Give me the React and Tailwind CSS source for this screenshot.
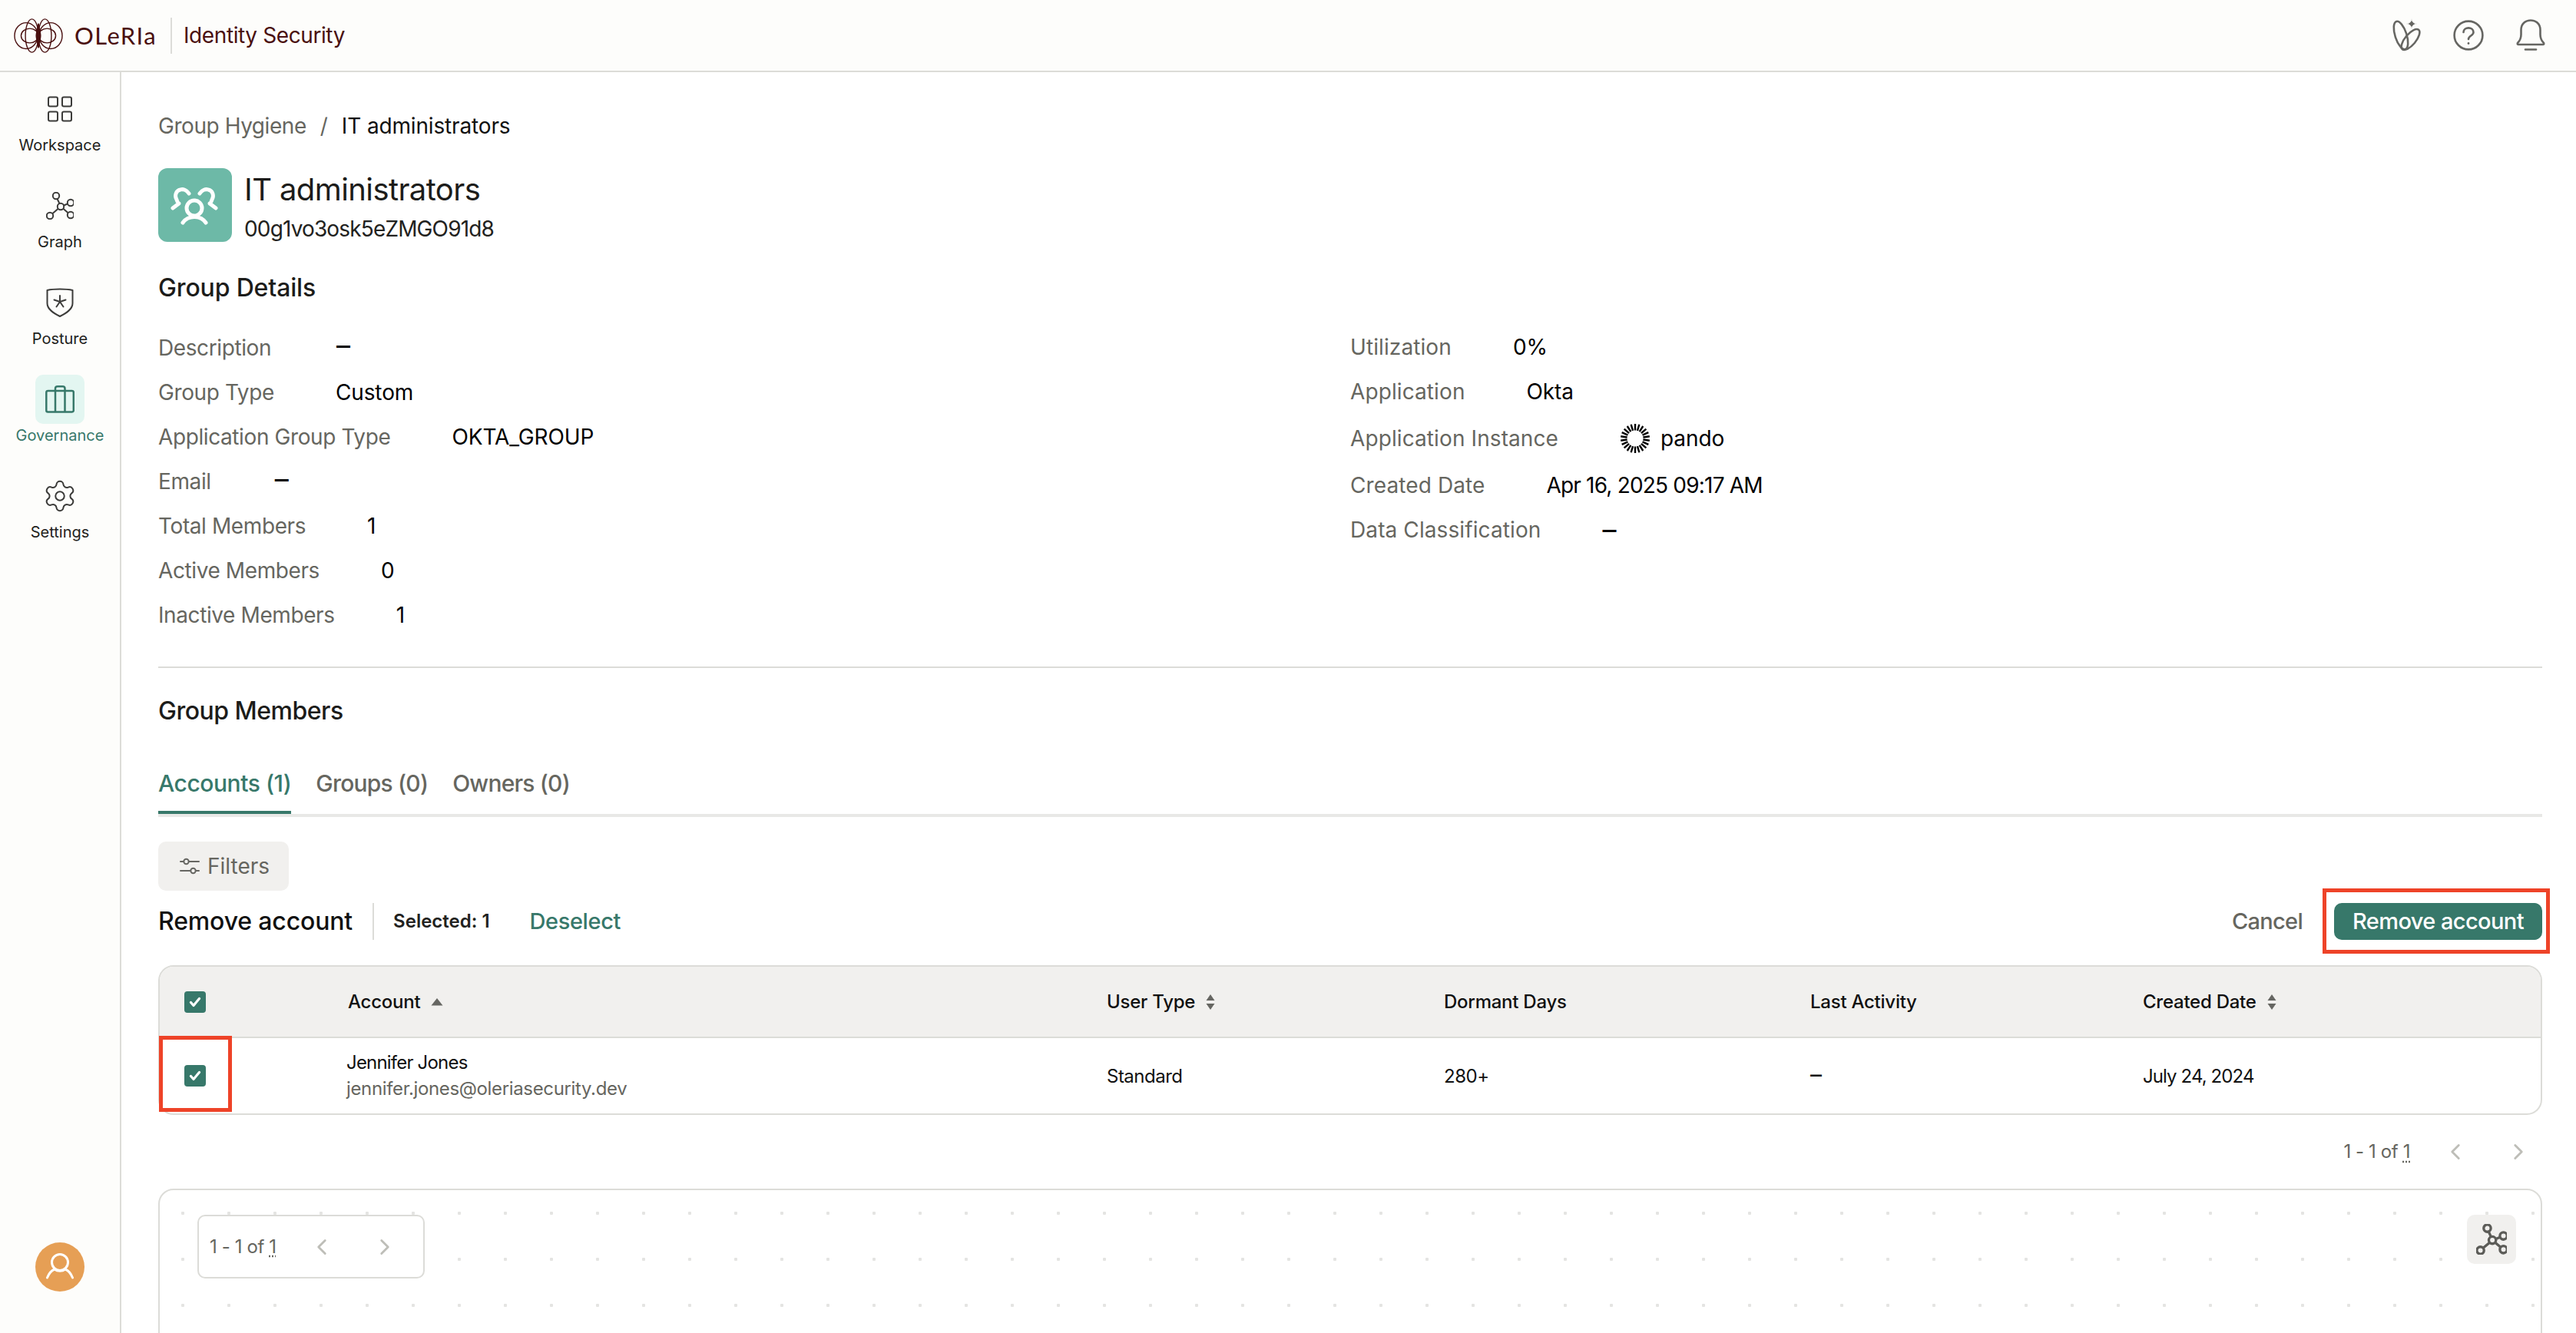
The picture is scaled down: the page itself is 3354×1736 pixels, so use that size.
import { Settings, ChevronLeft, ChevronRight } from 'lucide-react';

const Dash = ({ size = 'text-[36px]' }) => <span className={`${size} leading-none`}>–</span>;

const detailsLeft = [
  { label: 'Description', value: <span className="ml-[5px]"><Dash /></span> },
  { label: 'Group Type', value: 'Custom' },
  { label: 'Application Group Type', value: 'OKTA_GROUP' },
  { label: 'Email', value: <span className="ml-[3px]"><Dash /></span> },
  { label: 'Total Members', value: '1' },
  { label: 'Active Members', value: '0' },
  { label: 'Inactive Members', value: '1' },
];

const Logo = () => (
  <svg width="64" height="47" viewBox="0 0 68 50" fill="none" stroke="#4a1010" strokeWidth="1.5">
    <ellipse cx="17" cy="25" rx="16" ry="18" />
    <ellipse cx="51" cy="25" rx="16" ry="18" />
    <ellipse cx="22" cy="25" rx="12" ry="10" />
    <ellipse cx="46" cy="25" rx="12" ry="10" />
    <ellipse cx="25" cy="25" rx="9" ry="23" />
    <ellipse cx="43" cy="25" rx="9" ry="23" />
    <path d="M34 8 C32 18 31 22 31 25 C31 28 32 32 34 42 C36 32 37 28 37 25 C37 22 36 18 34 8 Z" fill="#4a1010" />
  </svg>
);

const LeafIcon = () => (
  <svg width="40" height="44" viewBox="0 0 40 44" fill="none" stroke="#666662" strokeWidth="2.6">
    <ellipse cx="12" cy="22" rx="7.5" ry="19" transform="rotate(-18 12 22)" />
    <ellipse cx="24.5" cy="27.5" rx="7" ry="16.5" transform="rotate(40 24.5 27.5)" />
    <path d="M26 0 C26.8 4.5 28 6 33 7 C28 8 26.8 9.5 26 14 C25.2 9.5 24 8 19 7 C24 6 25.2 4.5 26 0 Z" fill="#666662" stroke="#fdfdfb" strokeWidth="1" />
  </svg>
);

const HelpIcon = () => (
  <svg width="40" height="40" viewBox="0 0 40 40" fill="none" stroke="#666662" strokeWidth="2.6" strokeLinecap="round">
    <circle cx="20" cy="20" r="18.4" />
    <path d="M13.5 16 C13.5 8.5 26.5 8.5 26.5 16 C26.5 20.5 20 20.5 20 25" />
    <circle cx="20" cy="30.5" r="1.4" fill="#666662" stroke="none" />
  </svg>
);

const BellIcon = () => (
  <svg width="38" height="42" viewBox="0 0 38 42" fill="none" stroke="#666662" strokeWidth="2.6" strokeLinecap="round" strokeLinejoin="round">
    <path d="M2 31 C5 28 6.500 25 6.500 20 V14 C6.500 6 12 1.500 19 1.500 C26 1.500 31.500 6 31.500 14 V20 C31.500 25 33 28 36 31 C36.500 32.500 36 33 35 33 H3 C2 33 1.500 32.500 2 31 Z" />
    <path d="M12 39.500 H26" />
  </svg>
);

const WorkspaceIcon = () => (
  <svg width="34" height="34" viewBox="0 0 34 34" fill="none" stroke="#3c3c3a" strokeWidth="2">
    <rect x="2" y="1.500" width="12" height="12" rx="2" />
    <rect x="20" y="1.500" width="12" height="12" rx="2" />
    <rect x="2" y="20.500" width="12" height="12" rx="2" />
    <rect x="20" y="20.500" width="12" height="12" rx="2" />
  </svg>
);

const GraphIcon = ({ size = 36, color = '#3c3c3a', width = 2 }) => (
  <svg width={size} height={size} viewBox="0 0 36 36" fill="none" stroke={color} strokeWidth={width}>
    <circle cx="13" cy="5" r="4.200" />
    <circle cx="19" cy="19" r="4.200" />
    <circle cx="32" cy="14" r="4.200" />
    <circle cx="32" cy="30" r="4.200" />
    <circle cx="5" cy="31" r="4.200" />
    <path d="M14.600 9 L17.400 15 M23 17.500 L28 15.500 M22.300 21.800 L28.700 27.300 M15.800 21.800 L8.200 28.200" />
  </svg>
);

const PostureIcon = () => (
  <svg width="36" height="38" viewBox="0 0 36 38" fill="none" stroke="#3c3c3a" strokeWidth="2" strokeLinecap="round">
    <path d="M1.500 3 C10 1 26 1 34.500 3 V20 C34.500 28 26 33 18 37 C10 33 1.500 28 1.500 20 Z" strokeLinejoin="round" />
    <path d="M18 10 V18 M18 18 L25.500 15.500 M18 18 L10.500 15.500 M18 18 L22.500 24.500 M18 18 L13.500 24.500" />
  </svg>
);

const GovernanceIcon = () => (
  <svg width="38" height="36" viewBox="0 0 38 36" fill="none" stroke="#37786a" strokeWidth="2.500" strokeLinejoin="round">
    <rect x="1.300" y="7" width="35.500" height="27.500" rx="2" />
    <path d="M13 34 V7 M25.500 34 V7 M13 7 V4 C13 2 14 1.300 16 1.300 H22.500 C24.500 1.300 25.500 2 25.500 4 V7" />
  </svg>
);

const GroupIcon = () => (
  <svg width="96" height="96" viewBox="0 0 96 96" fill="none" stroke="#ffffff" strokeWidth="5" strokeLinecap="round" strokeLinejoin="round">
    <circle cx="47" cy="52" r="10" />
    <path d="M32 71 C39 61 55 61 62 71" />
    <path d="M40 33 C37 28 32 27 29 28 C23 29 21 36 24 41 C25 44 26 46 27 46 L19 52" />
    <path d="M54 33 C57 28 62 27 65 28 C71 29 73 36 70 41 C69 44 68 46 67 46 L75 52" />
  </svg>
);

const PandoIcon = () => (
  <svg width="40" height="40" viewBox="0 0 40 40" stroke="#000000" strokeWidth="2.400">
    {Array.from({ length: 22 }).map((_, i) => (
      <line key={i} x1="20" y1="1" x2="20" y2="9.500" transform={`rotate(${(i * 360) / 22} 20 20)`} />
    ))}
  </svg>
);

const FilterIcon = () => (
  <svg width="26" height="22" viewBox="0 0 26 22" fill="none" stroke="#666662" strokeWidth="2" strokeLinecap="round">
    <path d="M1 5 H5 M12 5 H25 M1 17 H14 M21 17 H25" />
    <circle cx="8.500" cy="5" r="3.200" />
    <circle cx="17.500" cy="17" r="3.200" />
  </svg>
);

const UserIcon = () => (
  <svg width="36" height="36" viewBox="0 0 36 36" fill="none" stroke="#ffffff" strokeWidth="3" strokeLinecap="round">
    <ellipse cx="18" cy="12" rx="10.500" ry="10.500" />
    <path d="M11 21 C6 23 3.500 27 1.500 32 M25 21 C30 23 32.500 27 34.500 32 M11 21 C15 24 21 24 25 21" />
  </svg>
);

const SortUp = () => (
  <svg width="16" height="10" viewBox="0 0 16 10" fill="#666662">
    <path d="M8 0 L15.500 9.500 H0.500 Z" />
  </svg>
);

const SortBoth = () => (
  <svg width="12" height="20" viewBox="0 0 12 20" fill="#666662">
    <path d="M6 0 L11.500 8 H0.500 Z M6 20 L11.500 12 H0.500 Z" />
  </svg>
);

const Check = () => (
  <div className="w-[28px] h-[28px] rounded-[4px] bg-[#37786a] flex items-center justify-center">
    <svg width="16" height="14" viewBox="0 0 16 14" fill="none" stroke="#ffffff" strokeWidth="3.200" strokeLinecap="round" strokeLinejoin="round">
      <path d="M2.500 7.500 L6 11.500 L13.500 2.500" />
    </svg>
  </div>
);

const NavItem = ({ icon, label, active }) => (
  <div className="h-[126px] flex flex-col items-center">
    <div className={`w-[64px] h-[64px] rounded-[10px] flex items-center justify-center ${active ? 'bg-[#e3f6f1]' : ''}`}>{icon}</div>
    <span className={`text-[20px] leading-[30px] ${active ? 'text-[#37786a]' : 'text-[#222220]'}`}>{label}</span>
  </div>
);

const DetailRow = ({ label, children, tall, right }) => (
  <div className={`flex items-center gap-[80px] ${tall ? 'h-[64px]' : 'h-[58px]'}`}>
    <span className={`text-[28px] text-[#66665f] ${right ? 'tracking-[0.1px]' : 'tracking-[-0.4px]'}`}>{label}</span>
    <span className="text-[28px] tracking-[-0.1px] text-black flex items-center">{children}</span>
  </div>
);

const Pager = () => (
  <div className="flex items-center text-[24px] tracking-[-0.4px] text-[#66665f]">
    <span className="whitespace-nowrap">1 - 1 of <span className="underline decoration-dotted underline-offset-4">1</span></span>
    <div className="ml-[52px] w-[14px] flex justify-center"><ChevronLeft size={34} strokeWidth={2} className="text-[#bebeb8] shrink-0" /></div>
    <div className="ml-[68px] w-[14px] flex justify-center"><ChevronRight size={34} strokeWidth={2} className="text-[#bebeb8] shrink-0" /></div>
  </div>
);

const App = () => {
  return (
    <div className="h-screen w-full flex flex-col overflow-hidden bg-white font-[Inter,sans-serif] text-black">
      <header className="h-[94px] shrink-0 border-b-2 border-[#dcdcd8] bg-[#fdfdfb] flex items-center pl-[18px] pr-[40px]">
        <Logo />
        <span className="ml-[15px] font-[Lato,sans-serif] text-[31px] tracking-[1.4px] text-[#4a1010]">OLeRIa</span>
        <div className="ml-[18px] w-[2px] h-[47px] bg-[#dcdcd8]" />
        <span className="ml-[15px] text-[28px] tracking-[-0.4px] text-[#4a1010]">Identity Security</span>
        <div className="ml-auto flex items-center">
          <LeafIcon />
          <div className="ml-[40px]"><HelpIcon /></div>
          <div className="ml-[42px]"><BellIcon /></div>
        </div>
      </header>

      <div className="flex flex-1 min-h-0">
        <aside className="w-[158px] shrink-0 border-r-2 border-[#dcdcd8] bg-[#fdfdfb] flex flex-col items-center pt-[16px]">
          <NavItem icon={<WorkspaceIcon />} label="Workspace" />
          <NavItem icon={<GraphIcon />} label="Graph" />
          <NavItem icon={<PostureIcon />} label="Posture" />
          <NavItem icon={<GovernanceIcon />} label="Governance" active />
          <NavItem icon={<Settings size={46} strokeWidth={1.05} className="text-[#3c3c3a]" />} label="Settings" />
          <div className="mt-auto mb-[54px] w-[64px] h-[64px] rounded-full bg-[#e69f55] flex items-center justify-center">
            <UserIcon />
          </div>
        </aside>

        <main className="flex-1 min-w-0 pl-[48px] pr-[44px] pt-[50px] overflow-hidden">
          <div className="h-[40px] flex items-center text-[28px]">
            <span className="tracking-[-0.45px] text-[#66665f]">Group Hygiene</span>
            <span className="mx-[18px] text-[#66665f]">/</span>
            <span className="tracking-[-0.15px] text-[#111]">IT administrators</span>
          </div>

          <div className="mt-[35px] flex items-start">
            <div className="w-[96px] h-[96px] rounded-[12px] bg-[#6db9a7]">
              <GroupIcon />
            </div>
            <div className="ml-[16px] h-[96px]">
              <div className="text-[40px] leading-[56px] tracking-[-0.6px] text-[#1c1c1a]">IT administrators</div>
              <div className="text-[28px] leading-[46px] tracking-[-0.85px] text-[#222220]">00g1vo3osk5eZMGO91d8</div>
            </div>
          </div>

          <h2 className="mt-[40px] h-[40px] leading-[40px] text-[32px] font-medium tracking-[-0.15px] text-[#1c1c1a]">Group Details</h2>

          <div className="mt-[28px] flex">
            <div className="w-[1552px] pt-[1px]">
              {detailsLeft.map((d) => (
                <DetailRow key={d.label} label={d.label}>{d.value}</DetailRow>
              ))}
            </div>
            <div>
              <DetailRow right label="Utilization">0%</DetailRow>
              <DetailRow right label="Application">Okta</DetailRow>
              <DetailRow right label="Application Instance" tall>
                <PandoIcon />
                <span className="ml-[13px]">pando</span>
              </DetailRow>
              <DetailRow right label="Created Date"><span className="tracking-[-0.8px]">Apr 16, 2025 09:17 AM</span></DetailRow>
              <DetailRow right label="Data Classification"><Dash /></DetailRow>
            </div>
          </div>

          <div className="mt-[38px] h-[2px] bg-[#dcdcd8]" />

          <h2 className="mt-[36px] h-[40px] leading-[40px] text-[32px] font-medium tracking-[-0.5px] text-[#1c1c1a]">Group Members</h2>

          <div className="mt-[50px] flex gap-[32px] border-b-4 border-[#e8e8e6] text-[30px] font-medium text-[#66665f]">
            <div className="h-[64px] leading-[48px] tracking-[-0.45px] border-b-4 border-[#37786a] text-[#37786a]">Accounts (1)</div>
            <div className="h-[64px] leading-[48px] tracking-[-0.8px]">Groups (0)</div>
            <div className="h-[64px] leading-[48px] tracking-[-0.8px]">Owners (0)</div>
          </div>

          <button className="mt-[32px] w-[170px] h-[64px] rounded-[10px] bg-[#f1f0ee] flex items-center pl-[28px] text-[28px] text-[#66665f]">
            <FilterIcon />
            <span className="ml-[10px]">Filters</span>
          </button>

          <div className="mt-[16px] h-[48px] flex items-center">
            <span className="text-[32px] font-medium tracking-[-0.15px] text-[#111]">Remove account</span>
            <div className="ml-[26px] w-[2px] h-[48px] bg-[#dcdcd8]" />
            <span className="ml-[25px] text-[24px] font-semibold text-[#222220]">Selected: 1</span>
            <span className="ml-[52px] text-[29px] font-medium tracking-[-0.4px] text-[#37786a]">Deselect</span>
            <span className="ml-auto text-[29px] font-medium tracking-[-0.7px] text-[#66665f]">Cancel</span>
            <div className="relative ml-[41px]">
              <button className="w-[271px] h-[48px] rounded-[10px] bg-[#37786a] text-white text-[29px] font-medium tracking-[-0.6px]">Remove account</button>
              <div className="absolute -left-[15px] -right-[10px] -top-[19px] -bottom-[18px] border-[5px] border-[#ee4328]" />
            </div>
          </div>

          <div className="mt-[33px] border-2 border-[#dcdcd8] rounded-[20px]">
            <div className="grid grid-cols-[245px_988px_439px_477px_433px_1fr] items-center h-[93px] bg-[#f1f0ee] rounded-t-[18px] border-b-2 border-[#dcdcd8] text-[24px] font-medium tracking-[-0.25px] text-[#111]">
              <div className="pl-[32px]"><Check /></div>
              <div className="flex items-center gap-[14px]">Account <SortUp /></div>
              <div className="flex items-center gap-[14px]">User Type <SortBoth /></div>
              <div>Dormant Days</div>
              <div>Last Activity</div>
              <div className="flex items-center gap-[14px]">Created Date <SortBoth /></div>
            </div>
            <div className="relative grid grid-cols-[245px_988px_439px_477px_433px_1fr] items-center h-[98px] text-[24px] tracking-[-0.5px] text-[#111]">
              <div className="pl-[32px]"><Check /></div>
              <div className="-ml-[2px]">
                <div className="leading-[34px] tracking-[-0.8px]">Jennifer Jones</div>
                <div className="leading-[34px] tracking-[-0.35px] text-[#66665f]">jennifer.jones@oleriasecurity.dev</div>
              </div>
              <div className="pt-[2px]">Standard</div>
              <div className="pt-[2px]">280+</div>
              <div className="pt-[2px]"><Dash size="text-[30px]" /></div>
              <div className="pt-[2px] tracking-[-0.9px]">July 24, 2024</div>
              <div className="absolute -left-[1px] -top-[3px] w-[95px] h-[99px] border-[5px] border-[#ee4328]" />
            </div>
          </div>

          <div className="mt-[28px] h-[40px] flex justify-end pr-[24px]">
            <Pager />
          </div>

          <div className="relative mt-[28px] h-[260px] border-2 border-[#dcdcd8] rounded-[20px] bg-[radial-gradient(circle,#e4e4e2_2px,transparent_2.5px)] bg-[length:60px_60px]">
            <div className="absolute left-[49px] top-[32px] w-[296px] h-[83px] border-2 border-[#dcdcd8] rounded-[10px] bg-white flex items-center pl-[14px]">
              <Pager />
            </div>
            <div className="absolute right-[32px] top-[32px] w-[64px] h-[64px] rounded-[10px] bg-[#f1f0ee] flex items-center justify-center">
              <GraphIcon size={40} color="#5c5c58" width={3} />
            </div>
          </div>
        </main>
      </div>
    </div>
  );
};

export default App;
